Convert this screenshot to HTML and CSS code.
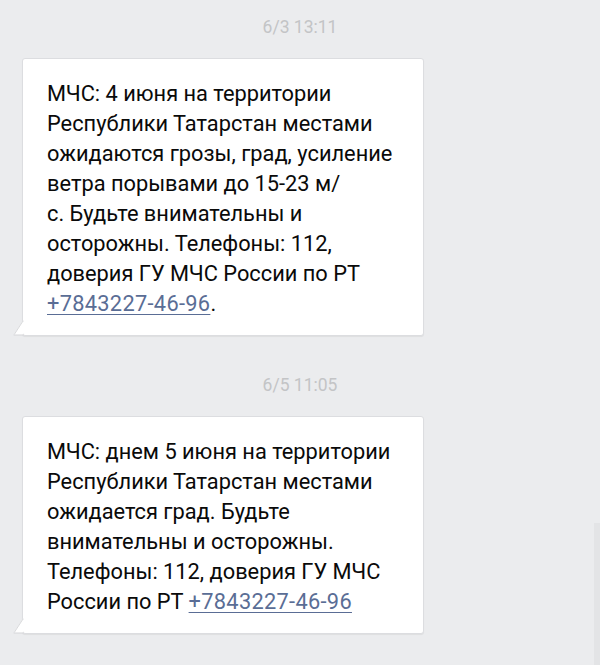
FILE: index.html
```html
<!DOCTYPE html>
<html lang="ru">
<head>
<meta charset="utf-8">
<title>SMS</title>
<link rel="stylesheet" href="styles.css">
</head>
<body>
<div class="chat">
  <div class="time">6/3 13:11</div>
  <div class="msg">
    <p class="text">МЧС: 4 июня на территории<br>Республики Татарстан местами<br>ожидаются грозы, град, усиление<br>ветра порывами до 15-23 м/<br>с. Будьте внимательны и<br>осторожны. Телефоны: 112,<br>доверия ГУ МЧС России по РТ<br><a class="link" href="#">+7843227-46-96</a>.</p>
    <svg class="tail" width="11" height="16" viewBox="0 0 11 16"><path d="M10 0.5 L1 14.5 L10 14.5" fill="#fff" stroke="none"/><path d="M10.5 1 L10 1 L1.2 14.6" fill="none" stroke="#d9dadc" stroke-width="1"/><rect x="0.6" y="14.6" width="10.4" height="1" fill="#d9dadc"/></svg>
  </div>
  <div class="time">6/5 11:05</div>
  <div class="msg">
    <p class="text">МЧС: днем 5 июня на территории<br>Республики Татарстан местами<br>ожидается град. Будьте<br>внимательны и осторожны.<br>Телефоны: 112, доверия ГУ МЧС<br>России по РТ <a class="link" href="#">+7843227-46-96</a></p>
    <svg class="tail" width="11" height="16" viewBox="0 0 11 16"><path d="M10 0.5 L1 14.5 L10 14.5" fill="#fff" stroke="none"/><path d="M10.5 1 L10 1 L1.2 14.6" fill="none" stroke="#d9dadc" stroke-width="1"/><rect x="0.6" y="14.6" width="10.4" height="1" fill="#d9dadc"/></svg>
  </div>
</div>
<div class="scrollbar"></div>
</body>
</html>
```
FILE: styles.css
```css
html, body {
  margin: 0;
  padding: 0;
  height: 100%;
  background: #ebecee;
  overflow: hidden;
}
body {
  position: relative;
  font-family: Roboto, "Noto Sans", sans-serif;
}
.chat {
  padding-top: 17px;
}
.time {
  height: 20px;
  line-height: 20px;
  font-size: 17.5px;
  color: #c3c4c6;
  text-align: center;
  margin-bottom: 21px;
}
.msg {
  position: relative;
  width: 400px;
  margin-left: 22px;
  margin-bottom: 39px;
  background: #fff;
  border: 1px solid #dcdde0;
  border-radius: 3px;
  box-shadow: 0 1px 1px rgba(0, 0, 0, 0.06);
  box-sizing: content-box;
}
.text {
  margin: 0;
  padding: 20px 24px 16px 24px;
  font-size: 21.8px;
  line-height: 30px;
  color: #0a0a0a;
  white-space: nowrap;
}
.link {
  color: #5a6d95;
  letter-spacing: 0.3px;
  text-decoration: underline;
  text-underline-offset: 3px;
  text-decoration-thickness: 1px;
}
.tail {
  position: absolute;
  left: -10px;
  bottom: -1px;
  display: block;
}
.scrollbar {
  position: absolute;
  right: 0;
  top: 523px;
  width: 6px;
  height: 142px;
  background: #e3e4e6;
}
```
